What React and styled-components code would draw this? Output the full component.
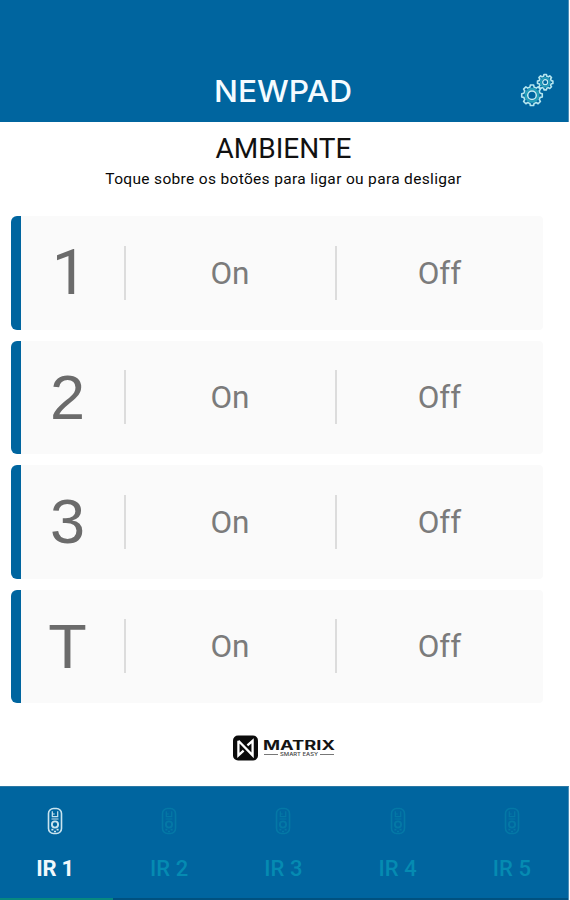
import styled, { createGlobalStyle, ThemeProvider } from 'styled-components'

const theme = {
  colors: {
    primary: '#00659f',
    surface: '#fafafa',
    divider: '#dcdcdc',
    number: '#6b6b6b',
    action: '#7b7b7b',
    teal: '#058bb2',
    indicator: '#07897f',
  },
  fonts: {
    body: "Roboto, 'Liberation Sans', sans-serif",
    number: "'Liberation Sans', Arial, sans-serif",
  },
}

const GlobalStyle = createGlobalStyle`
  * {
    box-sizing: border-box;
  }

  body {
    margin: 0;
    background: #fff;
    overflow: hidden;
  }

  button {
    border: 0;
    padding: 0;
    background: none;
    font: inherit;
    color: inherit;
  }
`

const Screen = styled.div`
  width: 570px;
  height: 900px;
  display: flex;
  flex-direction: column;
  background: #fff;
  font-family: ${({ theme }) => theme.fonts.body};
`

const Header = styled.header`
  width: 569px;
  height: 122px;
  flex-shrink: 0;
  display: grid;
  grid-template-columns: 1fr 146px 1fr;
  align-items: end;
  background: ${({ theme }) => theme.colors.primary};
  border-right: 1px solid #4d8fb8;
`

const Wordmark = styled.svg`
  grid-column: 2;
  width: 146px;
  height: 44px;
  margin-bottom: 9px;
`

const SettingsButton = styled.button`
  justify-self: end;
  width: 36px;
  height: 36px;
  margin: 0 12px 14px 0;

  svg {
    display: block;
  }
`

const Heading = styled.div`
  height: 94px;
  padding-top: 10px;
  text-align: center;
  flex-shrink: 0;
`

const Title = styled.h1`
  margin: 0 3px 0 0;
  font-size: 28px;
  font-weight: 400;
  line-height: 34px;
  color: #111;
`

const Subtitle = styled.p`
  margin: 3px 3px 0 0;
  font-size: 15.5px;
  line-height: 20px;
  letter-spacing: 0.33px;
  color: #080808;
`

const Rows = styled.main`
  display: flex;
  flex-direction: column;
  gap: 11px;
  padding: 0 27px 0 11px;
`

const Row = styled.section`
  height: 113.5px;
  display: grid;
  grid-template-columns: 103px 211px 1fr;
  align-items: center;
  background: ${({ theme }) => theme.colors.surface};
  border-left: 10px solid ${({ theme }) => theme.colors.primary};
  border-radius: 6px 4px 4px 6px;
`

const Number = styled.span`
  padding-right: ${({ $plain }) => ($plain ? 6 : 10)}px;
  text-align: center;
  font-family: ${({ $plain, theme }) => ($plain ? theme.fonts.body : theme.fonts.number)};
  font-size: 63px;
  line-height: 113px;
  color: ${({ theme }) => theme.colors.number};
`

const Action = styled.button`
  height: 54px;
  padding: 2px 1px 0 0;
  border-left: 2px solid ${({ theme }) => theme.colors.divider};
  font-size: 31.5px;
  line-height: 40px;
  color: ${({ theme }) => theme.colors.action};
`

const Brand = styled.div`
  flex: 1;
  display: flex;
  justify-content: center;
  padding: 28px 3px 0 0;
`

const Tabs = styled.nav`
  width: 569px;
  height: 114px;
  flex-shrink: 0;
  display: grid;
  grid-template-columns: 113px repeat(4, 114.25px);
  background: ${({ theme }) => theme.colors.primary};
  border-top: 1px solid #2b78a4;
  border-right: 1px solid #4d8fb8;
  overflow: hidden;
`

const Tab = styled.button`
  display: flex;
  flex-direction: column;
  align-items: center;
  padding-top: 19px;
  padding-right: ${({ $active }) => ($active ? 3 : 2)}px;
  font-size: 22px;
  font-weight: ${({ $active }) => ($active ? 700 : 500)};
  line-height: 26px;
  letter-spacing: ${({ $active }) => ($active ? -0.3 : 0.1)}px;
  color: ${({ $active, theme }) => ($active ? '#f1f8fc' : theme.colors.teal)};
  border-bottom: 2px solid ${({ $active, theme }) => ($active ? theme.colors.indicator : '#00517f')};
`

const RemoteSvg = styled.svg`
  width: 18px;
  height: 30px;
  margin-bottom: 20px;
  flex-shrink: 0;
  opacity: ${({ $active }) => ($active ? 1 : 0.6)};
`

const TabLabel = styled.span`
  white-space: nowrap;
`

const rows = ['1', '2', '3', 'T']
const tabs = ['IR 1', 'IR 2', 'IR 3', 'IR 4', 'IR 5']

function gearPath(cx, cy, outer, inner, teeth) {
  const points = []
  const step = (Math.PI * 2) / teeth
  for (let i = 0; i < teeth; i++) {
    const a = i * step - Math.PI / 2
    const shape = [
      [-0.32, inner],
      [-0.2, outer],
      [0.2, outer],
      [0.32, inner],
    ]
    shape.forEach(([offset, r]) => {
      const angle = a + offset * step
      points.push(`${(cx + Math.cos(angle) * r).toFixed(2)} ${(cy + Math.sin(angle) * r).toFixed(2)}`)
    })
  }
  return `M${points.join('L')}Z`
}

function GearsIcon() {
  return (
    <svg width="36" height="36" viewBox="0 0 36 36" fill="none" strokeLinejoin="round">
      <g stroke="#b5e6ef" strokeWidth="1.6">
        <path d={gearPath(12, 23.3, 10.4, 8.4, 8)} />
        <path d={gearPath(25.2, 10.2, 7.8, 6.2, 8)} />
      </g>
      <g stroke="#249fb8">
        <circle cx="12" cy="23.3" r="6.3" strokeWidth="2.4" />
        <circle cx="25.2" cy="10.2" r="4.4" strokeWidth="1.8" />
      </g>
      <g stroke="#c5edf3">
        <circle cx="12" cy="23.3" r="4.3" strokeWidth="1.5" />
        <circle cx="25.2" cy="10.2" r="2.5" strokeWidth="1.2" />
      </g>
    </svg>
  )
}

function RemoteIcon({ active }) {
  return (
    <RemoteSvg
      $active={active}
      viewBox="0 0 18 30"
      fill="none"
      stroke={active ? '#c9e4ef' : '#0785ab'}
      strokeWidth="1.6"
    >
      <rect x="2.5" y="2.5" width="13" height="25" rx="5" />
      <path d="M6.3 5.3v5.4h5.4V5.3M6.3 8h2.4M5.5 13h7" strokeWidth="1.2" />
      <circle cx="9" cy="18.5" r="3.1" strokeWidth="1.9" />
      <path d="M5.4 23.6h2M10.6 23.6h2M8 25.5h2" />
    </RemoteSvg>
  )
}

function MatrixLogo() {
  return (
    <svg width="104" height="32" viewBox="0 0 104 32">
      <rect x="1" y="4.5" width="25" height="25" rx="5" fill="#0b0b0b" />
      <path
        d="M6.4 9.8V24.4L11.6 19.6M6.4 9.8L20.6 24.4V9.8L15.4 14.4"
        fill="none"
        stroke="#fff"
        strokeWidth="2.3"
      />
      <text
        x="31"
        y="18.8"
        fontFamily="Inter, sans-serif"
        fontSize="12.5"
        fontWeight="700"
        textLength="72"
        lengthAdjust="spacingAndGlyphs"
        fill="#141414"
      >
        MATRIX
      </text>
      <path d="M32 23.5h14M88 23.5h14" stroke="#777" strokeWidth="1" />
      <text
        x="48"
        y="25.4"
        fontFamily="Inter, sans-serif"
        fontSize="4.5"
        fontWeight="500"
        textLength="38"
        lengthAdjust="spacingAndGlyphs"
        fill="#444"
      >
        SMART EASY
      </text>
    </svg>
  )
}

function App() {
  return (
    <ThemeProvider theme={theme}>
      <GlobalStyle />
      <Screen>
        <Header>
          <Wordmark viewBox="0 0 146 44">
            <text
              x="3"
              y="33"
              fontFamily="Inter, sans-serif"
              fontSize="30"
              fontWeight="500"
              textLength="138"
              lengthAdjust="spacingAndGlyphs"
              fill="#f5fbff"
            >
              NEWPAD
            </text>
          </Wordmark>
          <SettingsButton>
            <GearsIcon />
          </SettingsButton>
        </Header>

        <Heading>
          <Title>AMBIENTE</Title>
          <Subtitle>Toque sobre os botões para ligar ou para desligar</Subtitle>
        </Heading>

        <Rows>
          {rows.map((name) => (
            <Row key={name}>
              <Number $plain={name === '1'}>{name}</Number>
              <Action>On</Action>
              <Action>Off</Action>
            </Row>
          ))}
        </Rows>

        <Brand>
          <MatrixLogo />
        </Brand>

        <Tabs>
          {tabs.map((label, i) => (
            <Tab key={label} $active={i === 0}>
              <RemoteIcon active={i === 0} />
              <TabLabel>{label}</TabLabel>
            </Tab>
          ))}
        </Tabs>
      </Screen>
    </ThemeProvider>
  )
}

export default App
